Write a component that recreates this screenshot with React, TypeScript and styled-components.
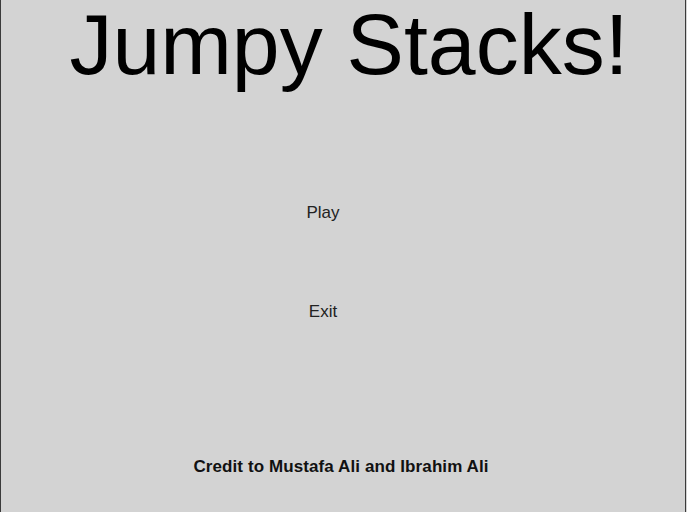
import React from 'react';
import styled, { createGlobalStyle } from 'styled-components';

const GlobalStyle = createGlobalStyle`
    html, body {
        margin: 0;
        padding: 0;
        background: #d3d3d3;
    }
`;

const Screen = styled.div`
    box-sizing: border-box;
    width: 686px;
    height: 512px;
    background: #d3d3d3;
    border-left: 1px solid #3a3a3a;
    border-right: 1px solid #3a3a3a;
    display: flex;
    flex-direction: column;
    align-items: center;
    font-family: "Liberation Sans", Arial, sans-serif;
    overflow: hidden;
`;

const Title = styled.h1`
    margin: 0;
    padding-left: 12px;
    font-size: 86px;
    line-height: 88px;
    font-weight: normal;
    color: #000000;
    white-space: nowrap;
`;

const Menu = styled.div`
    margin-top: 115px;
    padding-right: 40px;
    display: flex;
    flex-direction: column;
    align-items: center;
    gap: 79px;
`;

const MenuButton = styled.button`
    background: none;
    border: 0;
    padding: 0;
    font-family: inherit;
    font-size: 17px;
    line-height: 20px;
    color: #222222;
    cursor: pointer;
`;

const Credit = styled.p`
    margin: 135px 0 0;
    padding-right: 4px;
    font-size: 17px;
    line-height: 20px;
    font-weight: bold;
    letter-spacing: 0.1px;
    color: #111111;
`;

export default function App() {
    return (
        <>
            <GlobalStyle />
            <Screen>
                <Title>Jumpy Stacks!</Title>
                <Menu>
                    <MenuButton>Play</MenuButton>
                    <MenuButton>Exit</MenuButton>
                </Menu>
                <Credit>Credit to Mustafa Ali and Ibrahim Ali</Credit>
            </Screen>
        </>
    );
}
